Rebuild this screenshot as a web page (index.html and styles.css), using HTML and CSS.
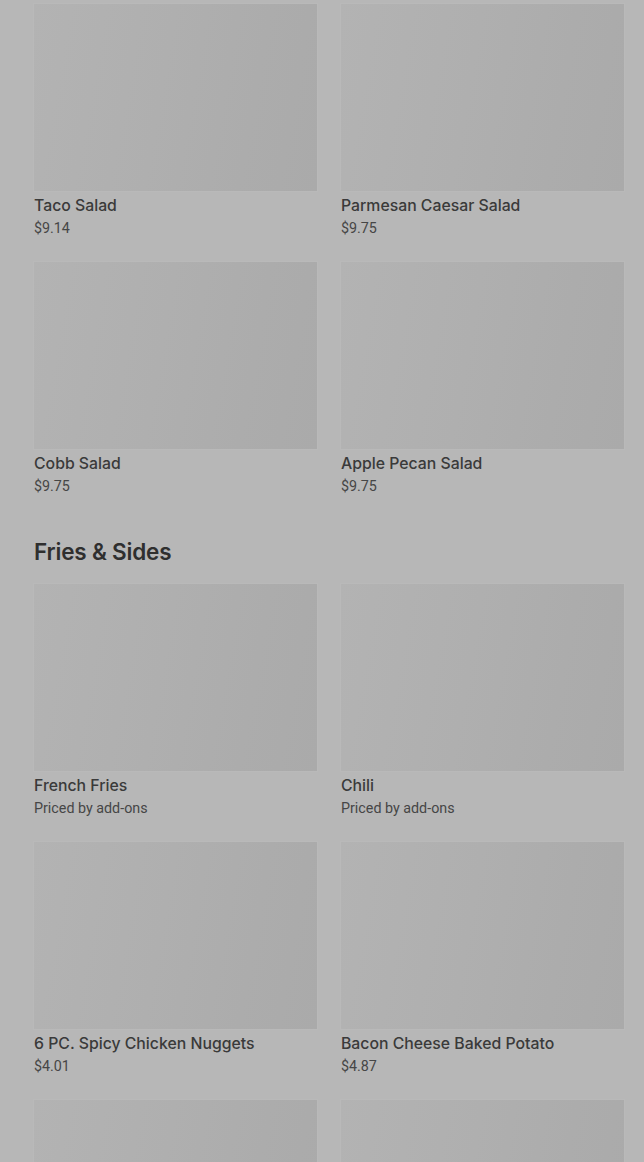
FILE: index.html
```html
<!DOCTYPE html>
<html lang="en">
<head>
  <meta charset="UTF-8" />
  <meta name="viewport" content="width=device-width, initial-scale=1.0"/>
  <title>Menu</title>
  <link rel="stylesheet" href="styles.css">
</head>
<body>

  <div class="menu">
    <section class="category">
      <div class="items">
        <div class="item">
          <div class="thumb"></div>
          <div class="name">Taco Salad</div>
          <div class="price">$9.14</div>
        </div>
        <div class="item">
          <div class="thumb"></div>
          <div class="name">Parmesan Caesar Salad</div>
          <div class="price">$9.75</div>
        </div>
        <div class="item">
          <div class="thumb"></div>
          <div class="name">Cobb Salad</div>
          <div class="price">$9.75</div>
        </div>
        <div class="item">
          <div class="thumb"></div>
          <div class="name">Apple Pecan Salad</div>
          <div class="price">$9.75</div>
        </div>
      </div>
    </section>

    <section class="category">
      <h2 class="category-title">Fries &amp; Sides</h2>
      <div class="items">
        <div class="item">
          <div class="thumb"></div>
          <div class="name">French Fries</div>
          <div class="price">Priced by add-ons</div>
        </div>
        <div class="item">
          <div class="thumb"></div>
          <div class="name">Chili</div>
          <div class="price">Priced by add-ons</div>
        </div>
        <div class="item">
          <div class="thumb"></div>
          <div class="name">6 PC. Spicy Chicken Nuggets</div>
          <div class="price">$4.01</div>
        </div>
        <div class="item">
          <div class="thumb"></div>
          <div class="name">Bacon Cheese Baked Potato</div>
          <div class="price">$4.87</div>
        </div>
        <div class="item">
          <div class="thumb"></div>
        </div>
        <div class="item">
          <div class="thumb"></div>
        </div>
      </div>
    </section>
  </div>

</body>
</html>
```

FILE: styles.css
```css
* {
  box-sizing: border-box;
}

body {
  margin: 0;
  background: #b7b7b7;
  font-family: Roboto, 'Noto Sans', sans-serif;
  color: #363636;
  overflow: hidden;
  height: 100vh;
}

.menu {
  padding: 4px 20px 0 34px;
}

.category-title {
  margin: 43px 0 18px;
  font-family: Inter, Roboto, sans-serif;
  font-size: 22.5px;
  line-height: 28px;
  font-weight: 600;
  letter-spacing: -0.2px;
  color: #2f2f2f;
}

.items {
  display: grid;
  grid-template-columns: repeat(2, 1fr);
  column-gap: 24px;
  row-gap: 25px;
}

.thumb {
  height: 187px;
  background: linear-gradient(100deg, #b3b3b3 0%, #afafaf 45%, #acacac 75%, #aaaaaa 100%);
  box-shadow: 0 0 0 1px rgba(255, 255, 255, 0.04);
}

.name {
  margin-top: 5px;
  font-family: Inter, Roboto, sans-serif;
  font-size: 15.8px;
  line-height: 20px;
  font-weight: 500;
  color: #3a3a3a;
}

.price {
  margin-top: 3px;
  font-size: 14.3px;
  line-height: 18px;
  color: #464646;
}
```
